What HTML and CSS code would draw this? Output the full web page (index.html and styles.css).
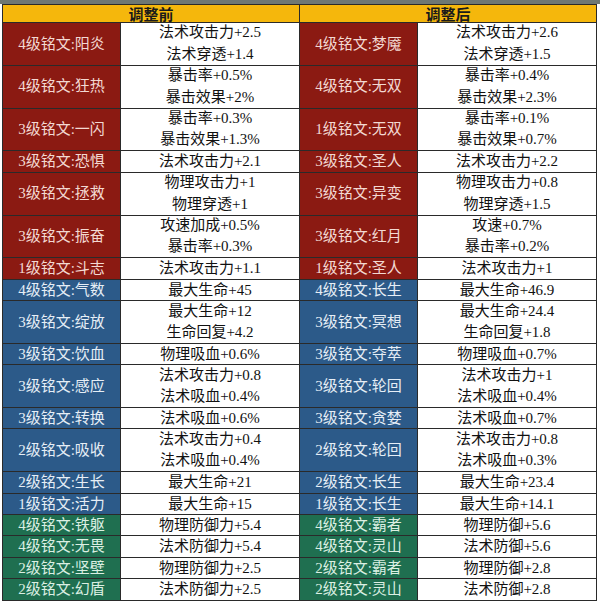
FILE: index.html
```html
<!DOCTYPE html>
<html lang="zh">
<head>
<meta charset="utf-8">
<link rel="stylesheet" href="styles.css">
</head>
<body>
<div class="topbar"></div>
<div class="sheet">
  <div class="head">调整前</div>
  <div class="head">调整后</div>

  <div class="lbl red r2">4级铭文:阳炎</div>
  <div class="val r2"><span>法术攻击力+2.5</span><span>法术穿透+1.4</span></div>
  <div class="lbl red r2">4级铭文:梦魇</div>
  <div class="val r2"><span>法术攻击力+2.6</span><span>法术穿透+1.5</span></div>

  <div class="lbl red r2">4级铭文:狂热</div>
  <div class="val r2"><span>暴击率+0.5%</span><span>暴击效果+2%</span></div>
  <div class="lbl red r2">4级铭文:无双</div>
  <div class="val r2"><span>暴击率+0.4%</span><span>暴击效果+2.3%</span></div>

  <div class="lbl red r2">3级铭文:一闪</div>
  <div class="val r2"><span>暴击率+0.3%</span><span>暴击效果+1.3%</span></div>
  <div class="lbl red r2">1级铭文:无双</div>
  <div class="val r2"><span>暴击率+0.1%</span><span>暴击效果+0.7%</span></div>

  <div class="lbl red">3级铭文:恐惧</div>
  <div class="val">法术攻击力+2.1</div>
  <div class="lbl red">3级铭文:圣人</div>
  <div class="val">法术攻击力+2.2</div>

  <div class="lbl red r2">3级铭文:拯救</div>
  <div class="val r2"><span>物理攻击力+1</span><span>物理穿透+1</span></div>
  <div class="lbl red r2">3级铭文:异变</div>
  <div class="val r2"><span>物理攻击力+0.8</span><span>物理穿透+1.5</span></div>

  <div class="lbl red r2">3级铭文:振奋</div>
  <div class="val r2"><span>攻速加成+0.5%</span><span>暴击率+0.3%</span></div>
  <div class="lbl red r2">3级铭文:红月</div>
  <div class="val r2"><span>攻速+0.7%</span><span>暴击率+0.2%</span></div>

  <div class="lbl red">1级铭文:斗志</div>
  <div class="val">法术攻击力+1.1</div>
  <div class="lbl red">1级铭文:圣人</div>
  <div class="val">法术攻击力+1</div>

  <div class="lbl blue">4级铭文:气数</div>
  <div class="val">最大生命+45</div>
  <div class="lbl blue">4级铭文:长生</div>
  <div class="val">最大生命+46.9</div>

  <div class="lbl blue r2">3级铭文:绽放</div>
  <div class="val r2"><span>最大生命+12</span><span>生命回复+4.2</span></div>
  <div class="lbl blue r2">3级铭文:冥想</div>
  <div class="val r2"><span>最大生命+24.4</span><span>生命回复+1.8</span></div>

  <div class="lbl blue">3级铭文:饮血</div>
  <div class="val">物理吸血+0.6%</div>
  <div class="lbl blue">3级铭文:夺萃</div>
  <div class="val">物理吸血+0.7%</div>

  <div class="lbl blue r2">3级铭文:感应</div>
  <div class="val r2"><span>法术攻击力+0.8</span><span>法术吸血+0.4%</span></div>
  <div class="lbl blue r2">3级铭文:轮回</div>
  <div class="val r2"><span>法术攻击力+1</span><span>法术吸血+0.4%</span></div>

  <div class="lbl blue">3级铭文:转换</div>
  <div class="val">法术吸血+0.6%</div>
  <div class="lbl blue">3级铭文:贪婪</div>
  <div class="val">法术吸血+0.7%</div>

  <div class="lbl blue r2">2级铭文:吸收</div>
  <div class="val r2"><span>法术攻击力+0.4</span><span>法术吸血+0.4%</span></div>
  <div class="lbl blue r2">2级铭文:轮回</div>
  <div class="val r2"><span>法术攻击力+0.8</span><span>法术吸血+0.3%</span></div>

  <div class="lbl blue">2级铭文:生长</div>
  <div class="val">最大生命+21</div>
  <div class="lbl blue">2级铭文:长生</div>
  <div class="val">最大生命+23.4</div>

  <div class="lbl blue">1级铭文:活力</div>
  <div class="val">最大生命+15</div>
  <div class="lbl blue">1级铭文:长生</div>
  <div class="val">最大生命+14.1</div>

  <div class="lbl green">4级铭文:铁躯</div>
  <div class="val">物理防御力+5.4</div>
  <div class="lbl green">4级铭文:霸者</div>
  <div class="val">物理防御+5.6</div>

  <div class="lbl green">4级铭文:无畏</div>
  <div class="val">法术防御力+5.4</div>
  <div class="lbl green">4级铭文:灵山</div>
  <div class="val">法术防御+5.6</div>

  <div class="lbl green">2级铭文:坚壁</div>
  <div class="val">物理防御力+2.5</div>
  <div class="lbl green">2级铭文:霸者</div>
  <div class="val">物理防御+2.8</div>

  <div class="lbl green">2级铭文:幻盾</div>
  <div class="val">法术防御力+2.5</div>
  <div class="lbl green">2级铭文:灵山</div>
  <div class="val">法术防御+2.8</div>
</div>
</body>
</html>
```

FILE: styles.css
```css
html, body {
  margin: 0;
  padding: 0;
  background: #ffffff;
}

body {
  font-family: "Liberation Serif", "Noto Sans CJK SC", serif;
  font-size: 15px;
  color: #111111;
}

.topbar {
  height: 4px;
  background: #6f7873;
}

.sheet {
  display: grid;
  grid-template-columns: 117px 178px 117px 178px;
  grid-template-rows: 17px;
  grid-auto-rows: 20.4px;
  gap: 1px;
  width: fit-content;
  margin-left: 2px;
  background: #2a2a2a;
  border: 1px solid #2a2a2a;
}

.head {
  grid-column: span 2;
  background: #f5b70c;
  color: #1a1a1a;
  font-family: "Noto Sans CJK SC", sans-serif;
  font-weight: 700;
  font-size: 15px;
  line-height: 17px;
  text-align: center;
}

.lbl {
  display: flex;
  align-items: center;
  justify-content: center;
  line-height: 20.4px;
  white-space: nowrap;
}

.val {
  display: flex;
  flex-direction: column;
  align-items: center;
  justify-content: center;
  background: #ffffff;
  color: #111111;
  line-height: 20.4px;
  white-space: nowrap;
}

.val span {
  display: block;
  line-height: 21.4px;
}

.r2 {
  grid-row: span 2;
}

.red {
  background: #8b1a12;
  color: #f3d9d2;
}

.blue {
  background: #2c5a89;
  color: #e6eef6;
}

.green {
  background: #1f6f50;
  color: #dcefe3;
}
```
